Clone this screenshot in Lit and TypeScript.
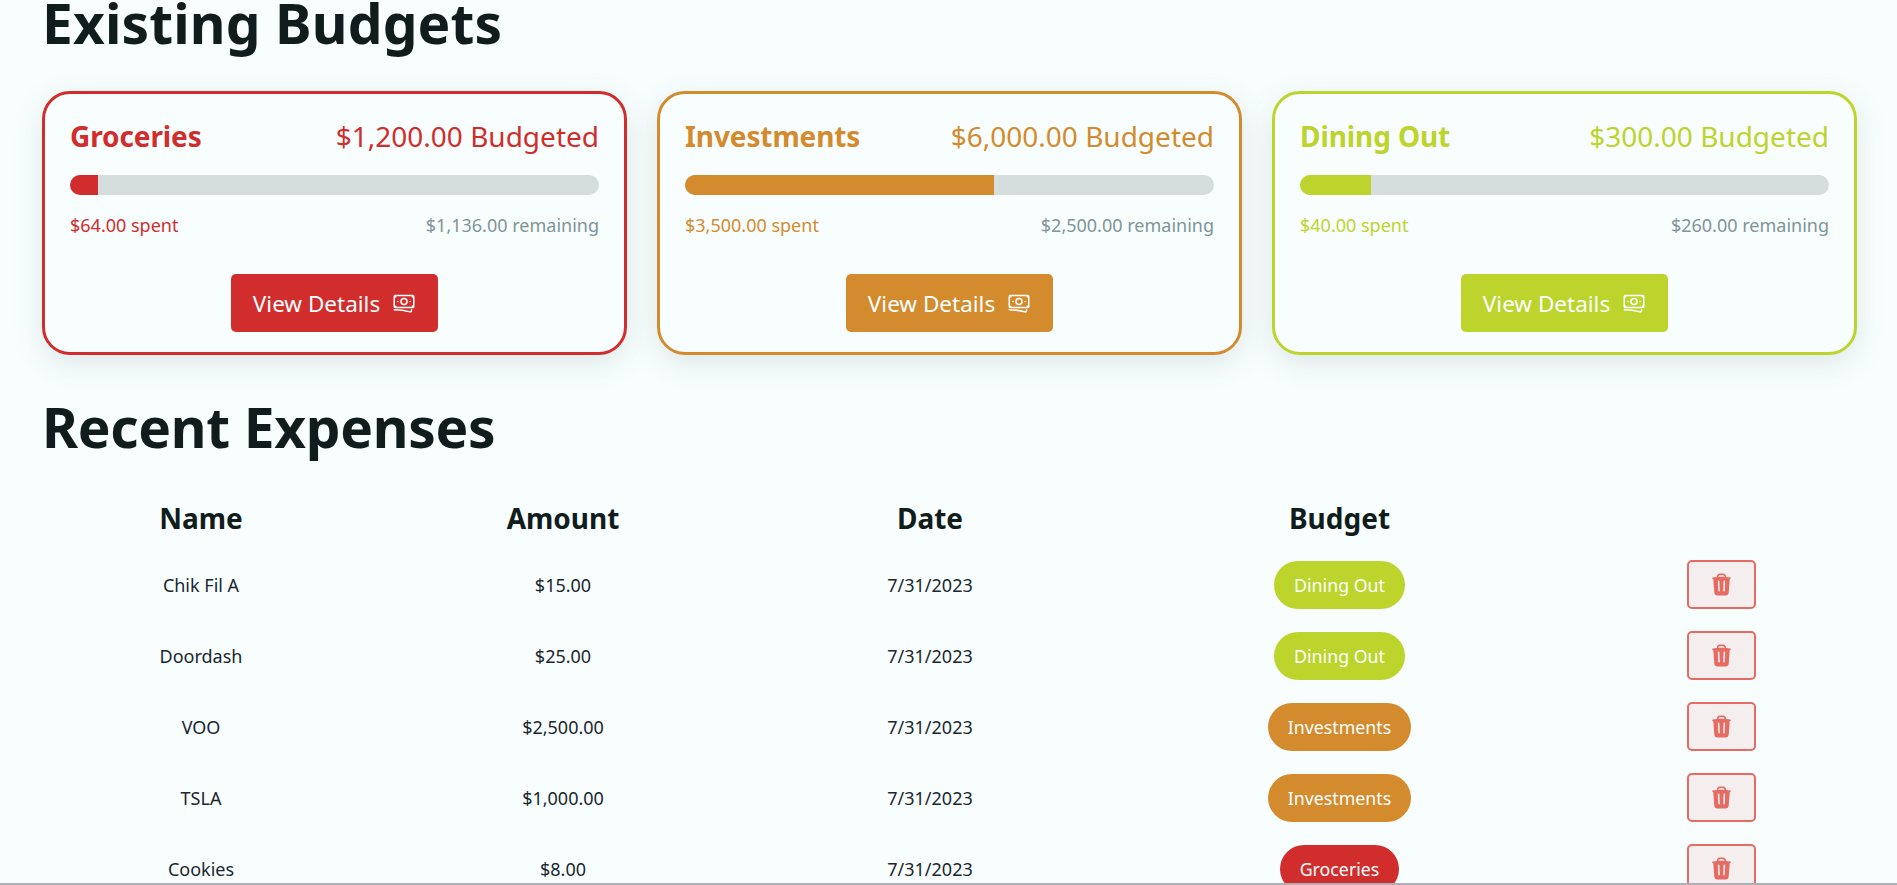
import { LitElement, html, css, svg } from "lit";
import { customElement } from "lit/decorators.js";

const money = svg`<path stroke-linecap="round" stroke-linejoin="round" d="M2.25 18.75a60.07 60.07 0 0115.797 2.101c.727.198 1.453-.342 1.453-1.096V18.75M3.75 4.5v.75A.75.75 0 013 6h-.75m0 0v-.375c0-.621.504-1.125 1.125-1.125H20.25M2.25 6v9m18-10.5v.75c0 .414.336.75.75.75h.75m-1.5-1.5h.375c.621 0 1.125.504 1.125 1.125v9.75c0 .621-.504 1.125-1.125 1.125h-.375m1.5-1.5H21a.75.75 0 00-.75.75v.75m0 0H3.75m0 0h-.375a1.125 1.125 0 01-1.125-1.125V15m1.5 1.5v-.75A.75.75 0 003 15h-.75M15 10.5a3 3 0 11-6 0 3 3 0 016 0zm3 0h.008v.008H18V10.5zm-12 0h.008v.008H6V10.5z"/>`;
const trash = svg`<path fill-rule="evenodd" clip-rule="evenodd" d="M16.5 4.478v.227a48.816 48.816 0 013.878.512.75.75 0 11-.256 1.478l-.209-.035-1.005 13.07a3 3 0 01-2.991 2.77H8.084a3 3 0 01-2.991-2.77L4.087 6.66l-.209.035a.75.75 0 01-.256-1.478A48.567 48.567 0 017.5 4.705v-.227c0-1.564 1.213-2.9 2.816-2.951a52.662 52.662 0 013.369 0c1.603.051 2.815 1.387 2.815 2.951zm-6.136-1.452a51.196 51.196 0 013.273 0C14.39 3.05 15 3.684 15 4.478v.113a49.488 49.488 0 00-6 0v-.113c0-.794.609-1.428 1.364-1.452zm-.355 5.945a.75.75 0 10-1.5.058l.347 9a.75.75 0 101.499-.058l-.346-9zm5.48.058a.75.75 0 10-1.498-.058l-.347 9a.75.75 0 001.5.058l.345-9z"/>`;

const budgets = [
  { name: "Groceries", total: "$1,200.00", spent: "$64.00", left: "$1,136.00", pct: 5.33, c: "#d12d2d" },
  { name: "Investments", total: "$6,000.00", spent: "$3,500.00", left: "$2,500.00", pct: 58.33, c: "#d38b2e" },
  { name: "Dining Out", total: "$300.00", spent: "$40.00", left: "$260.00", pct: 13.33, c: "#bcd42b" },
];
const expenses = [
  { n: "Chik Fil A", a: "$15.00", b: 2 },
  { n: "Doordash", a: "$25.00", b: 2 },
  { n: "VOO", a: "$2,500.00", b: 1 },
  { n: "TSLA", a: "$1,000.00", b: 1 },
  { n: "Cookies", a: "$8.00", b: 0 },
];

@customElement("app-root")
export class AppRoot extends LitElement {
  static styles = css`
    :host {
      display: flex;
      flex-direction: column;
      height: 885px;
      overflow: hidden;
      background: #f8fefe;
      border-bottom: 2px solid #aeb0b5;
      box-sizing: border-box;
      font-family: "Noto Sans", "Open Sans", sans-serif;
      color: #111c1c;
    }
    main { padding: 0 40px 0 42px; margin-top: -5px; }
    h2 {
      margin: 0;
      font-size: 55px;
      line-height: 55px;
      font-weight: 700;
      color: #111c1c;
    }
    .h-existing { letter-spacing: 0.15px; }
    .h-recent { letter-spacing: -0.32px; }
    .cards {
      display: grid;
      grid-template-columns: repeat(3, 585px);
      column-gap: 30px;
      margin-top: 41px;
      margin-bottom: 44px;
    }
    .card {
      box-sizing: border-box;
      height: 264px;
      border: 3px solid var(--c);
      border-radius: 28px;
      padding: 24px 25px 20px;
      color: var(--c);
      box-shadow: 0 8px 30px rgba(60, 90, 90, 0.14);
      display: flex;
      flex-direction: column;
    }
    .top { display: flex; justify-content: space-between; align-items: center; height: 36px; }
    .title { font-size: 28px; font-weight: 700; letter-spacing: -0.1px; }
    .total { font-size: 28px; }
    .track { height: 20px; border-radius: 10px; background: #d5dddd; overflow: hidden; margin-top: 21px; flex: none; }
    .fill { height: 100%; background: var(--c); }
    .meta { display: flex; justify-content: space-between; font-size: 18px; line-height: 24px; margin-top: 18px; }
    .remain { color: #7f9499; }
    .view {
      align-self: center;
      flex: none;
      margin-top: 37px;
      width: 207px;
      height: 58px;
      border-radius: 5px;
      background: var(--c);
      color: #fbffff;
      display: flex;
      align-items: center;
      justify-content: center;
      gap: 12px;
      font-size: 22.5px;
    }
    .view svg { width: 24px; height: 24px; fill: none; stroke: currentColor; stroke-width: 1.5; }
    table { border-collapse: collapse; table-layout: fixed; width: 1815px; margin-top: 33px; text-align: center; }
    .c1 { width: 318px; } .c2 { width: 406px; } .c3 { width: 328px; } .c4 { width: 491px; } .c5 { width: 272px; }
    th { font-size: 28px; font-weight: 700; height: 62px; padding: 0; }
    td { font-size: 18px; height: 71px; padding: 0; color: #1a2630; }
    .pill {
      display: inline-flex;
      align-items: center;
      height: 48px;
      padding: 0 20px;
      border-radius: 24px;
      background: var(--c);
      color: #fbffff;
      font-size: 17.8px;
      vertical-align: middle;
    }
    .del {
      display: inline-flex;
      align-items: center;
      justify-content: center;
      box-sizing: border-box;
      width: 69px;
      height: 49px;
      border: 2px solid #e56b63;
      border-radius: 5px;
      background: #f5eeee;
      vertical-align: middle;
    }
    .del svg { width: 25px; height: 25px; fill: #e56b63; }
  `;

  render() {
    return html`<main>
      <h2 class="h-existing">Existing Budgets</h2>
      <div class="cards">
        ${budgets.map(
          (b) => html`<div class="card" style="--c:${b.c}">
            <div class="top"><span class="title">${b.name}</span><span class="total">${b.total} Budgeted</span></div>
            <div class="track"><div class="fill" style="width:${b.pct}%"></div></div>
            <div class="meta"><span>${b.spent} spent</span><span class="remain">${b.left} remaining</span></div>
            <div class="view">View Details <svg viewBox="0 0 24 24">${money}</svg></div>
          </div>`
        )}
      </div>
      <h2 class="h-recent">Recent Expenses</h2>
      <table>
        <colgroup><col class="c1" /><col class="c2" /><col class="c3" /><col class="c4" /><col class="c5" /></colgroup>
        <thead><tr><th>Name</th><th>Amount</th><th>Date</th><th>Budget</th><th></th></tr></thead>
        <tbody>
          ${expenses.map(
            (e) => html`<tr>
              <td>${e.n}</td><td>${e.a}</td><td>7/31/2023</td>
              <td><span class="pill" style="--c:${budgets[e.b].c}">${budgets[e.b].name}</span></td>
              <td><span class="del"><svg viewBox="0 0 24 24">${trash}</svg></span></td>
            </tr>`
          )}
        </tbody>
      </table>
    </main>`;
  }
}
